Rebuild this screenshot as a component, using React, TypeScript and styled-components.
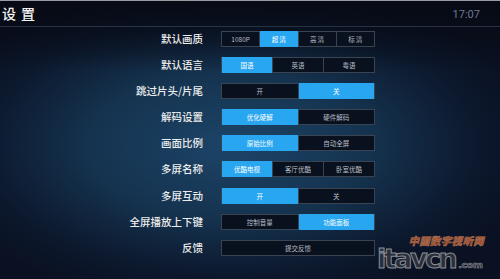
import React from 'react';
import styled, { createGlobalStyle } from 'styled-components';

const cjk = `"Noto Sans CJK SC", "Noto Sans", sans-serif`;

interface Setting {
  label: string;
  options: string[];
  active: number;
}

const settings: Setting[] = [
  { label: '默认画质', options: ['1080P', '超 清', '高 清', '标 清'], active: 1 },
  { label: '默认语言', options: ['国语', '英语', '粤语'], active: 0 },
  { label: '跳过片头/片尾', options: ['开', '关'], active: 1 },
  { label: '解码设置', options: ['优化硬解', '硬件解码'], active: 0 },
  { label: '画面比例', options: ['原始比例', '自动全屏'], active: 0 },
  { label: '多屏名称', options: ['优酷电视', '客厅优酷', '卧室优酷'], active: 0 },
  { label: '多屏互动', options: ['开', '关'], active: 0 },
  { label: '全屏播放上下键', options: ['控制音量', '功能面板'], active: 1 },
  { label: '反馈', options: ['提交反馈'], active: -1 },
];

const GlobalStyle = createGlobalStyle`
  html, body {
    margin: 0;
    padding: 0;
    background: #090f1e;
  }
`;

export default function App() {
  return (
    <>
      <GlobalStyle />
      <Screen>
        <Header>
          <Title>设置</Title>
          <Clock>17:07</Clock>
        </Header>
        <SettingsGrid>
          {settings.map(s => (
            <React.Fragment key={s.label}>
              <Label>{s.label}</Label>
              <Segments>
                {s.options.map((o, i) => (
                  <Segment key={o} active={i === s.active}>
                    {o}
                  </Segment>
                ))}
              </Segments>
            </React.Fragment>
          ))}
        </SettingsGrid>
        <Watermark>
          <WatermarkCn>中国数字视听网</WatermarkCn>
          <WatermarkEn>
            itavcn<small>.com</small>
          </WatermarkEn>
        </Watermark>
      </Screen>
    </>
  );
}

const Screen = styled.div`
  position: relative;
  width: 500px;
  height: 279px;
  overflow: hidden;
  box-sizing: border-box;
  border-top: 1px solid #9a9ca2;
  font-family: ${cjk};
  background:
    linear-gradient(180deg, rgba(6, 9, 18, 0.85) 0px, rgba(6, 9, 18, 0.6) 27px, rgba(6, 9, 18, 0) 70px),
    radial-gradient(ellipse 62% 58% at 46% 52%, #1c4468 0%, #15334f 45%, #0c182d 80%, #0a1122 100%);
`;

const Header = styled.div`
  height: 25px;
  display: flex;
  align-items: center;
  justify-content: space-between;
  padding: 0 20px 0 2px;
  border-bottom: 1px solid #263246;
`;

const Title = styled.div`
  color: #f2f2f2;
  font-size: 14px;
  font-weight: 500;
  letter-spacing: 5px;
  margin-top: -1px;
`;

const Clock = styled.div`
  color: #6b7890;
  font-family: Roboto, "Liberation Sans", sans-serif;
  font-size: 11px;
  margin-top: 2px;
`;

const SettingsGrid = styled.div`
  display: grid;
  grid-template-columns: 203px 154px;
  grid-auto-rows: 16px;
  column-gap: 18px;
  row-gap: 10.1px;
  padding-top: 4px;
`;

const Label = styled.div`
  color: #ececec;
  font-size: 10.5px;
  font-weight: 500;
  text-align: right;
  line-height: 16px;
  white-space: nowrap;
`;

const Segments = styled.div`
  display: flex;
  border: 1px solid #3a4352;
  box-sizing: border-box;
  background: #0a111e;
`;

const Segment = styled.div<{ active?: boolean }>`
  flex: 1;
  display: flex;
  align-items: center;
  justify-content: center;
  font-size: 6.5px;
  color: ${p => (p.active ? '#ffffff' : '#b9bec8')};
  background: ${p => (p.active ? '#29a6f0' : 'transparent')};
  margin: ${p => (p.active ? '-1px 0' : '0')};
  & + & {
    border-left: 1px solid #3a4352;
  }
`;

const Watermark = styled.div`
  position: absolute;
  left: 377px;
  top: 234px;
  width: 108px;
  display: flex;
  flex-direction: column;
  align-items: flex-end;
  pointer-events: none;
`;

const WatermarkCn = styled.div`
  font-family: ${cjk};
  font-size: 10.5px;
  font-weight: 900;
  font-style: italic;
  line-height: 12px;
  letter-spacing: 0.3px;
  color: #b8582a;
  -webkit-text-stroke: 0.4px #d09070;
  margin-right: 1px;
  opacity: 0.85;
  white-space: nowrap;
`;

const WatermarkEn = styled.div`
  font-family: "DejaVu Sans", "Liberation Sans", sans-serif;
  font-size: 27px;
  font-weight: 700;
  line-height: 27px;
  letter-spacing: -2.5px;
  color: #2b2f3a;
  -webkit-text-stroke: 1px #8a8e96;
  align-self: flex-start;
  margin-top: -2px;
  white-space: nowrap;
  small {
    font-size: 9.5px;
    letter-spacing: -0.3px;
    margin-left: 3px;
    -webkit-text-stroke: 0.6px #8a8e96;
  }
`;
